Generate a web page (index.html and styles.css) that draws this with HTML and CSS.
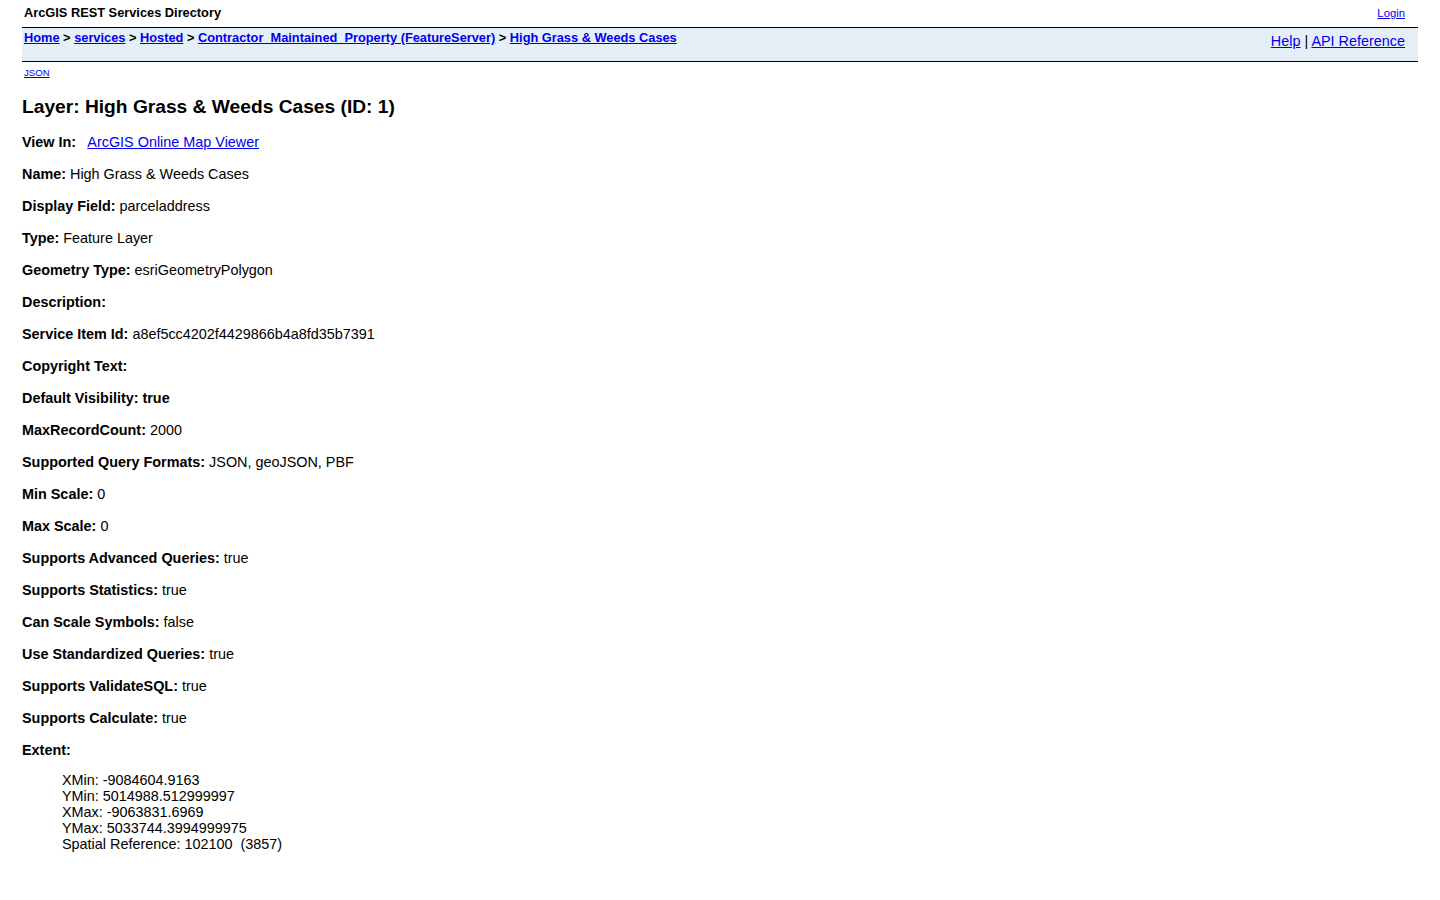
FILE: index.html
```html
<!DOCTYPE html>
<html lang="en">
<head>
<meta charset="utf-8">
<title>Layer: High Grass &amp; Weeds Cases (ID: 1)</title>
<link rel="stylesheet" href="styles.css">
</head>
<body>
<div class="userbar">
  <div class="titlecell">ArcGIS REST Services Directory</div>
  <a class="login" href="#">Login</a>
</div>
<div class="navbar">
  <div class="breadcrumbs">
    <a href="#">Home</a> &gt; <a href="#">services</a> &gt; <a href="#">Hosted</a> &gt; <a href="#">Contractor_Maintained_Property (FeatureServer)</a> &gt; <a href="#">High Grass &amp; Weeds Cases</a>
  </div>
  <div class="apiref"><a href="#">Help</a> | <a href="#">API Reference</a></div>
</div>
<div class="formats"><a href="#">JSON</a></div>

<h2 class="layer-title">Layer: High Grass &amp; Weeds Cases (ID: 1)</h2>

<div class="props">
  <div class="prop"><b>View In:</b>&nbsp;&nbsp; <a href="#">ArcGIS Online Map Viewer</a></div>
  <div class="prop"><b>Name:</b> High Grass &amp; Weeds Cases</div>
  <div class="prop"><b>Display Field:</b> parceladdress</div>
  <div class="prop"><b>Type:</b> Feature Layer</div>
  <div class="prop"><b>Geometry Type:</b> esriGeometryPolygon</div>
  <div class="prop"><b>Description:</b> </div>
  <div class="prop"><b>Service Item Id:</b> a8ef5cc4202f4429866b4a8fd35b7391</div>
  <div class="prop"><b>Copyright Text:</b> </div>
  <div class="prop"><b>Default Visibility: true</b></div>
  <div class="prop"><b>MaxRecordCount:</b> 2000</div>
  <div class="prop"><b>Supported Query Formats:</b> JSON, geoJSON, PBF</div>
  <div class="prop"><b>Min Scale:</b> 0</div>
  <div class="prop"><b>Max Scale:</b> 0</div>
  <div class="prop"><b>Supports Advanced Queries:</b> true</div>
  <div class="prop"><b>Supports Statistics:</b> true</div>
  <div class="prop"><b>Can Scale Symbols:</b> false</div>
  <div class="prop"><b>Use Standardized Queries:</b> true</div>
  <div class="prop"><b>Supports ValidateSQL:</b> true</div>
  <div class="prop"><b>Supports Calculate:</b> true</div>
  <div class="prop extent-label"><b>Extent:</b></div>
  <ul class="extent">
    <li>XMin: -9084604.9163</li>
    <li>YMin: 5014988.512999997</li>
    <li>XMax: -9063831.6969</li>
    <li>YMax: 5033744.3994999975</li>
    <li>Spatial Reference: 102100&nbsp; (3857)</li>
  </ul>
</div>
</body>
</html>
```

FILE: styles.css
```css
html, body {
  margin: 0;
  padding: 0;
  background: #ffffff;
  color: #000000;
  font-family: "Liberation Sans", Arial, sans-serif;
  font-size: 14.4px;
}

body {
  padding: 0 22px;
}

a {
  color: #0000ee;
  text-decoration: underline;
}

/* top bar: directory title and login */
.userbar {
  display: flex;
  justify-content: space-between;
  align-items: baseline;
  height: 27px;
  box-sizing: border-box;
  padding: 5px 13px 0 2px;
}

.titlecell {
  font-size: 12.8px;
  font-weight: bold;
  line-height: 15px;
}

.login {
  font-size: 11.3px;
  line-height: 15px;
}

/* breadcrumb navigation bar */
.navbar {
  display: flex;
  justify-content: space-between;
  align-items: flex-start;
  background: #e5eff7;
  border-top: 1px solid #000000;
  border-bottom: 1px solid #000000;
  height: 35px;
  box-sizing: border-box;
  padding: 0 13px 0 2px;
}

.breadcrumbs {
  font-size: 12.8px;
  font-weight: bold;
  line-height: 15px;
  padding-top: 2px;
}

.apiref {
  font-size: 14.4px;
  line-height: 16px;
  padding-top: 5px;
}

.formats {
  font-size: 9.6px;
  line-height: 11px;
  margin-top: 5px;
  padding-left: 2px;
}

.layer-title {
  font-size: 19.2px;
  font-weight: bold;
  line-height: 22px;
  margin: 18px 0 16px;
}

.props {
  line-height: 16px;
}

.prop {
  margin-bottom: 16px;
}

.extent-label {
  margin-bottom: 14px;
}

.extent {
  list-style: none;
  margin: 0;
  padding-left: 40px;
}
```
